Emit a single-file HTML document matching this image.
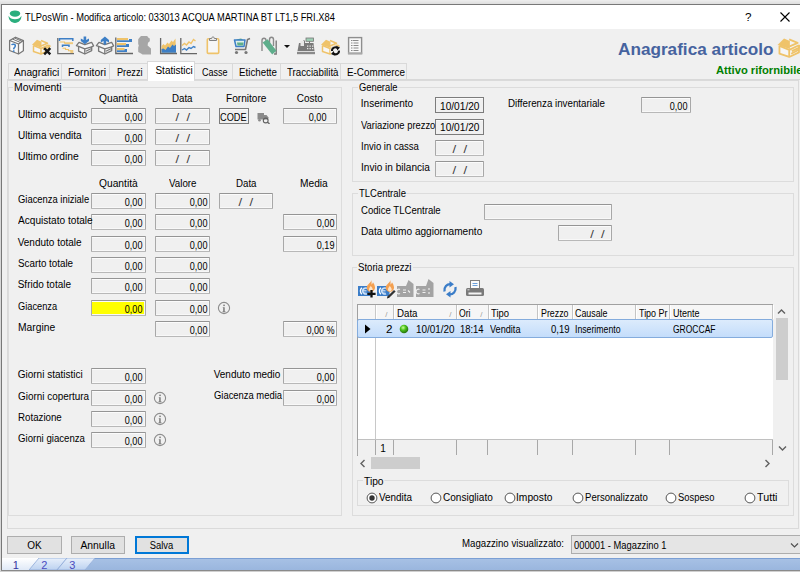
<!DOCTYPE html>
<html><head><meta charset="utf-8"><style>
html,body{margin:0;padding:0;}
body{width:800px;height:572px;overflow:hidden;position:relative;background:#f0f0f0;font-family:"Liberation Sans",sans-serif;}
div,svg{position:absolute;}
.t{white-space:nowrap;line-height:1;position:absolute;}
.lbg{background:#f0f0f0;padding:0 1px;margin-left:-1px;}
.fg{box-sizing:border-box;border:1px solid #a8a8a8;border-top-color:#959595;border-bottom-color:#b8b8b8;box-shadow:inset 0 1px 0 #fbfbfb,inset 0 -1px 0 #f8f8f8,inset -1px 0 0 #f6f6f6;border-radius:1px;}
.fw{box-sizing:border-box;background:#f0f0f0;border:1px solid #7c7c7c;box-shadow:inset 0 1px 0 #fafafa;}
.gb{box-sizing:border-box;border:1px solid #dcdcdc;}
</style></head><body>
<div style="position:absolute;left:0px;top:0px;width:800px;height:4px;background:linear-gradient(#eeeeee,#dedede)"></div>
<div style="position:absolute;left:0px;top:4px;width:1px;height:568px;background:#d8d8d8"></div>
<div style="position:absolute;left:1px;top:4px;width:799px;height:1px;background:#787878"></div>
<div style="position:absolute;left:1px;top:4px;width:1px;height:567px;background:#787878"></div>
<div style="position:absolute;left:2px;top:5px;width:798px;height:24px;background:#fff"></div>
<div style="position:absolute;left:1px;top:570px;width:799px;height:1px;background:#8a8a8a"></div>
<div style="position:absolute;left:0px;top:571px;width:800px;height:1px;background:#d0d0d0"></div>
<svg style="position:absolute;left:8px;top:9px" width="14" height="15" viewBox="0 0 14 15"><ellipse cx="7" cy="4.6" rx="5.2" ry="3.2" fill="#2bae7e"/><path d="M0.6 6.8 C1.5 9.2 4 10.3 7 10.3 C10 10.3 12.5 9.2 13.4 6.8 C13.6 10.8 10.8 13.9 7 13.9 C3.2 13.9 0.4 10.8 0.6 6.8z" fill="#2bae7e"/></svg>
<svg style="position:absolute;left:780px;top:12px" width="10" height="10" viewBox="0 0 10 10"><path d="M0.5 0.5L9.5 9.5M9.5 0.5L0.5 9.5" stroke="#000" stroke-width="1.1"/></svg>
<div style="position:absolute;left:8px;top:63px;width:399px;height:17px;background:#f0f0f0;border:1px solid #d9d9d9;box-sizing:border-box;border-bottom:none"></div>
<div style="position:absolute;left:7px;top:79px;width:900px;height:1px;background:#d9d9d9"></div>
<div style="position:absolute;left:61px;top:63px;width:1px;height:16px;background:#d9d9d9"></div>
<div style="position:absolute;left:109px;top:63px;width:1px;height:16px;background:#d9d9d9"></div>
<div style="position:absolute;left:232px;top:63px;width:1px;height:16px;background:#d9d9d9"></div>
<div style="position:absolute;left:280px;top:63px;width:1px;height:16px;background:#d9d9d9"></div>
<div style="position:absolute;left:340px;top:63px;width:1px;height:16px;background:#d9d9d9"></div>
<div style="position:absolute;left:147px;top:61px;width:48px;height:20px;background:#fff;border:1px solid #d9d9d9;border-bottom:none;box-sizing:border-box"></div>
<div style="position:absolute;left:7px;top:80px;width:792px;height:449px;border:1px solid #dadada;box-sizing:border-box;background:#f0f0f0"></div>
<div style="position:absolute;left:148px;top:79px;width:46px;height:2px;background:#fff"></div>
<div class="gb" style="left:8px;top:87px;width:334px;height:429px"></div>
<div class="fg" style="left:91px;top:108px;width:55px;height:16px;background:#f0f0f0"></div>
<div class="fg" style="left:155px;top:108px;width:55px;height:16px;background:#f0f0f0"></div>
<div class="fg" style="left:91px;top:129px;width:55px;height:16px;background:#f0f0f0"></div>
<div class="fg" style="left:155px;top:129px;width:55px;height:16px;background:#f0f0f0"></div>
<div class="fg" style="left:91px;top:150px;width:55px;height:16px;background:#f0f0f0"></div>
<div class="fg" style="left:155px;top:150px;width:55px;height:16px;background:#f0f0f0"></div>
<div class="fw" style="left:219px;top:108px;width:30px;height:16px"></div>
<div class="fg" style="left:283px;top:108px;width:54px;height:16px;background:#f0f0f0"></div>
<svg style="position:absolute;left:257px;top:112px" width="14" height="12" viewBox="0 0 14 12"><path d="M0.5 1h6.5v6.5h-6.5z" fill="#8a8a8a"/><path d="M7 3h2.5l1.8 2.2v2.3h-4.3z" fill="#8a8a8a"/><circle cx="2.5" cy="8.2" r="1.3" fill="#8a8a8a"/><circle cx="8.7" cy="8.5" r="2.4" fill="none" stroke="#606060" stroke-width="1.1"/><path d="M10.4 10.3l2.2 1.5" stroke="#606060" stroke-width="1.3"/></svg>
<div class="fg" style="left:91px;top:193px;width:55px;height:16px;background:#f0f0f0"></div>
<div class="fg" style="left:155px;top:193px;width:55px;height:16px;background:#f0f0f0"></div>
<div class="fg" style="left:91px;top:214px;width:55px;height:16px;background:#f0f0f0"></div>
<div class="fg" style="left:155px;top:214px;width:55px;height:16px;background:#f0f0f0"></div>
<div class="fg" style="left:91px;top:236px;width:55px;height:16px;background:#f0f0f0"></div>
<div class="fg" style="left:155px;top:236px;width:55px;height:16px;background:#f0f0f0"></div>
<div class="fg" style="left:91px;top:257px;width:55px;height:16px;background:#f0f0f0"></div>
<div class="fg" style="left:155px;top:257px;width:55px;height:16px;background:#f0f0f0"></div>
<div class="fg" style="left:91px;top:278px;width:55px;height:16px;background:#f0f0f0"></div>
<div class="fg" style="left:155px;top:278px;width:55px;height:16px;background:#f0f0f0"></div>
<div class="fg" style="left:91px;top:300px;width:55px;height:16px;background:#ffff00"></div>
<div class="fg" style="left:155px;top:300px;width:55px;height:16px;background:#f0f0f0"></div>
<div class="fg" style="left:219px;top:193px;width:54px;height:16px;background:#f0f0f0"></div>
<div class="fg" style="left:283px;top:214px;width:54px;height:16px;background:#f0f0f0"></div>
<div class="fg" style="left:283px;top:236px;width:54px;height:16px;background:#f0f0f0"></div>
<svg style="position:absolute;left:217px;top:301px" width="14" height="14" viewBox="0 0 14 14"><circle cx="7" cy="7" r="5.6" fill="none" stroke="#8c8c8c" stroke-width="1.1"/><rect x="6.3" y="3.6" width="1.5" height="1.5" fill="#7a7a7a"/><path d="M5.8 6.2h1.9v4.2h0.9v0.9h-3.2v-0.9h0.8v-3.3h-0.4z" fill="#7a7a7a"/></svg>
<div class="fg" style="left:155px;top:321px;width:55px;height:16px;background:#f0f0f0"></div>
<div class="fg" style="left:283px;top:321px;width:54px;height:16px;background:#f0f0f0"></div>
<div class="fg" style="left:91px;top:368px;width:55px;height:16px;background:#f0f0f0"></div>
<div class="fg" style="left:91px;top:390px;width:55px;height:16px;background:#f0f0f0"></div>
<svg style="position:absolute;left:152.5px;top:391px" width="14" height="14" viewBox="0 0 14 14"><circle cx="7" cy="7" r="5.6" fill="none" stroke="#8c8c8c" stroke-width="1.1"/><rect x="6.3" y="3.6" width="1.5" height="1.5" fill="#7a7a7a"/><path d="M5.8 6.2h1.9v4.2h0.9v0.9h-3.2v-0.9h0.8v-3.3h-0.4z" fill="#7a7a7a"/></svg>
<div class="fg" style="left:91px;top:411px;width:55px;height:16px;background:#f0f0f0"></div>
<svg style="position:absolute;left:152.5px;top:412px" width="14" height="14" viewBox="0 0 14 14"><circle cx="7" cy="7" r="5.6" fill="none" stroke="#8c8c8c" stroke-width="1.1"/><rect x="6.3" y="3.6" width="1.5" height="1.5" fill="#7a7a7a"/><path d="M5.8 6.2h1.9v4.2h0.9v0.9h-3.2v-0.9h0.8v-3.3h-0.4z" fill="#7a7a7a"/></svg>
<div class="fg" style="left:91px;top:432px;width:55px;height:16px;background:#f0f0f0"></div>
<svg style="position:absolute;left:152.5px;top:433px" width="14" height="14" viewBox="0 0 14 14"><circle cx="7" cy="7" r="5.6" fill="none" stroke="#8c8c8c" stroke-width="1.1"/><rect x="6.3" y="3.6" width="1.5" height="1.5" fill="#7a7a7a"/><path d="M5.8 6.2h1.9v4.2h0.9v0.9h-3.2v-0.9h0.8v-3.3h-0.4z" fill="#7a7a7a"/></svg>
<div class="fg" style="left:283px;top:368px;width:54px;height:16px;background:#f0f0f0"></div>
<div class="fg" style="left:283px;top:390px;width:54px;height:16px;background:#f0f0f0"></div>
<div class="gb" style="left:352px;top:87px;width:442px;height:95px"></div>
<div class="fw" style="left:435px;top:97px;width:49px;height:16px"></div>
<div class="fw" style="left:435px;top:119px;width:49px;height:16px"></div>
<div class="fg" style="left:435px;top:140px;width:49px;height:16px;background:#f0f0f0"></div>
<div class="fg" style="left:435px;top:161px;width:49px;height:16px;background:#f0f0f0"></div>
<div class="fg" style="left:641px;top:97px;width:50px;height:16px;background:#f0f0f0"></div>
<div class="gb" style="left:352px;top:193px;width:442px;height:63px"></div>
<div class="fg" style="left:484px;top:204px;width:128px;height:16px;background:#f0f0f0"></div>
<div class="fg" style="left:558px;top:225px;width:54px;height:16px;background:#f0f0f0"></div>
<div class="gb" style="left:352px;top:267px;width:442px;height:249px"></div>
<div style="position:absolute;left:357px;top:304px;width:416px;height:152px;background:#fff;border-top:1px solid #a0a0a0;border-left:1px solid #a0a0a0;box-sizing:border-box"></div>
<div style="position:absolute;left:358px;top:305px;width:415px;height:15px;background:#f6f6f6"></div>
<div style="position:absolute;left:375px;top:305px;width:1px;height:14px;background:#c4c4c4"></div>
<div style="position:absolute;left:376px;top:305px;width:1px;height:14px;background:#fff"></div>
<div style="position:absolute;left:393px;top:305px;width:1px;height:14px;background:#c4c4c4"></div>
<div style="position:absolute;left:394px;top:305px;width:1px;height:14px;background:#fff"></div>
<div style="position:absolute;left:456px;top:305px;width:1px;height:14px;background:#c4c4c4"></div>
<div style="position:absolute;left:457px;top:305px;width:1px;height:14px;background:#fff"></div>
<div style="position:absolute;left:488px;top:305px;width:1px;height:14px;background:#c4c4c4"></div>
<div style="position:absolute;left:489px;top:305px;width:1px;height:14px;background:#fff"></div>
<div style="position:absolute;left:537px;top:305px;width:1px;height:14px;background:#c4c4c4"></div>
<div style="position:absolute;left:538px;top:305px;width:1px;height:14px;background:#fff"></div>
<div style="position:absolute;left:572px;top:305px;width:1px;height:14px;background:#c4c4c4"></div>
<div style="position:absolute;left:573px;top:305px;width:1px;height:14px;background:#fff"></div>
<div style="position:absolute;left:635px;top:305px;width:1px;height:14px;background:#c4c4c4"></div>
<div style="position:absolute;left:636px;top:305px;width:1px;height:14px;background:#fff"></div>
<div style="position:absolute;left:669px;top:305px;width:1px;height:14px;background:#c4c4c4"></div>
<div style="position:absolute;left:670px;top:305px;width:1px;height:14px;background:#fff"></div>
<div style="position:absolute;left:772px;top:305px;width:1px;height:14px;background:#c4c4c4"></div>
<div style="position:absolute;left:773px;top:305px;width:1px;height:14px;background:#fff"></div>
<div style="position:absolute;left:358px;top:319px;width:415px;height:1px;background:#d5d5d5"></div>
<div style="position:absolute;left:357px;top:319px;width:416px;height:19px;background:linear-gradient(#dcebfc,#c4ddfb);border:1px solid #84acdd;border-radius:2px;box-sizing:border-box"></div>
<svg style="position:absolute;left:364px;top:324px" width="8" height="10" viewBox="0 0 8 10"><path d="M1 0.5L6.5 5L1 9.5z" fill="#000"/></svg>
<div style="position:absolute;left:375px;top:305px;width:1px;height:14px;background:#c8c8c8"></div>
<div style="position:absolute;left:375px;top:338px;width:1px;height:101px;background:#c8c8c8"></div>
<div style="position:absolute;left:358px;top:439px;width:415px;height:17px;background:#f0f0f0;border-top:1px solid #c0c0c0;box-sizing:border-box"></div>
<div style="position:absolute;left:357px;top:440px;width:1px;height:15px;background:#a8a8a8"></div>
<div style="position:absolute;left:375px;top:440px;width:1px;height:15px;background:#a8a8a8"></div>
<div style="position:absolute;left:393px;top:440px;width:1px;height:15px;background:#a8a8a8"></div>
<div style="position:absolute;left:456px;top:440px;width:1px;height:15px;background:#a8a8a8"></div>
<div style="position:absolute;left:487px;top:440px;width:1px;height:15px;background:#a8a8a8"></div>
<div style="position:absolute;left:537px;top:440px;width:1px;height:15px;background:#a8a8a8"></div>
<div style="position:absolute;left:572px;top:440px;width:1px;height:15px;background:#a8a8a8"></div>
<div style="position:absolute;left:635px;top:440px;width:1px;height:15px;background:#a8a8a8"></div>
<div style="position:absolute;left:669px;top:440px;width:1px;height:15px;background:#a8a8a8"></div>
<div style="position:absolute;left:772px;top:440px;width:1px;height:15px;background:#a8a8a8"></div>
<svg style="position:absolute;left:399px;top:324px" width="10" height="10" viewBox="0 0 10 10"><defs><radialGradient id="gb" cx="0.4" cy="0.35" r="0.6"><stop offset="0" stop-color="#c8ff9a"/><stop offset="0.5" stop-color="#4cc21c"/><stop offset="1" stop-color="#2a7a10"/></radialGradient></defs><circle cx="5" cy="5" r="4.3" fill="url(#gb)"/></svg>
<div style="position:absolute;left:774px;top:304px;width:15px;height:152px;background:#f0f0f0"></div>
<div style="position:absolute;left:776px;top:318px;width:12px;height:62px;background:#cdcdcd"></div>
<svg style="position:absolute;left:777px;top:308px" width="9" height="7" viewBox="0 0 9 7"><path d="M1 5.5L4.5 2L8 5.5" fill="none" stroke="#606060" stroke-width="1.4"/></svg>
<svg style="position:absolute;left:778px;top:445px" width="9" height="7" viewBox="0 0 9 7"><path d="M1 1.5L4.5 5L8 1.5" fill="none" stroke="#606060" stroke-width="1.4"/></svg>
<div style="position:absolute;left:371px;top:457px;width:49px;height:12px;background:#cdcdcd"></div>
<svg style="position:absolute;left:359px;top:459px" width="7" height="9" viewBox="0 0 7 9"><path d="M5.5 1L2 4.5L5.5 8" fill="none" stroke="#606060" stroke-width="1.4"/></svg>
<svg style="position:absolute;left:764px;top:459px" width="7" height="9" viewBox="0 0 7 9"><path d="M1.5 1L5 4.5L1.5 8" fill="none" stroke="#606060" stroke-width="1.4"/></svg>
<div class="gb" style="left:357px;top:480px;width:432px;height:26px"></div>
<svg style="position:absolute;left:365.5px;top:491.5px" width="12" height="12" viewBox="0 0 12 12"><circle cx="6" cy="6" r="4.9" fill="#fff" stroke="#555" stroke-width="1"/><circle cx="6" cy="6" r="2.7" fill="#333"/></svg>
<svg style="position:absolute;left:429.5px;top:491.5px" width="12" height="12" viewBox="0 0 12 12"><circle cx="6" cy="6" r="4.9" fill="#fff" stroke="#555" stroke-width="1"/></svg>
<svg style="position:absolute;left:503.5px;top:491.5px" width="12" height="12" viewBox="0 0 12 12"><circle cx="6" cy="6" r="4.9" fill="#fff" stroke="#555" stroke-width="1"/></svg>
<svg style="position:absolute;left:571.5px;top:491.5px" width="12" height="12" viewBox="0 0 12 12"><circle cx="6" cy="6" r="4.9" fill="#fff" stroke="#555" stroke-width="1"/></svg>
<svg style="position:absolute;left:665px;top:491.5px" width="12" height="12" viewBox="0 0 12 12"><circle cx="6" cy="6" r="4.9" fill="#fff" stroke="#555" stroke-width="1"/></svg>
<svg style="position:absolute;left:743.5px;top:491.5px" width="12" height="12" viewBox="0 0 12 12"><circle cx="6" cy="6" r="4.9" fill="#fff" stroke="#555" stroke-width="1"/></svg>
<div style="position:absolute;left:7px;top:536px;width:55px;height:18px;background:#e1e1e1;border:1px solid #adadad;box-sizing:border-box"></div>
<div style="position:absolute;left:71px;top:536px;width:54px;height:18px;background:#e1e1e1;border:1px solid #adadad;box-sizing:border-box"></div>
<div style="position:absolute;left:135px;top:536px;width:54px;height:18px;background:#e1e1e1;border:2px solid #0078d7;box-sizing:border-box"></div>
<div style="position:absolute;left:571px;top:535px;width:240px;height:19px;background:#e5e5e5;border:1px solid #adadad;box-sizing:border-box"></div>
<svg style="position:absolute;left:790px;top:542px" width="9" height="7" viewBox="0 0 9 7"><path d="M1 1.5L4.5 5L8 1.5" fill="none" stroke="#505050" stroke-width="1.2"/></svg>
<svg style="position:absolute;left:2px;top:558px" width="798" height="12" viewBox="0 0 798 12"><defs><linearGradient id="bar" x1="0" y1="0" x2="0" y2="1"><stop offset="0" stop-color="#7b9fd4"/><stop offset="0.1" stop-color="#7b9fd4"/><stop offset="0.12" stop-color="#a6c0e4"/><stop offset="1" stop-color="#9ab6de"/></linearGradient><linearGradient id="tb" x1="0" y1="0" x2="0" y2="1"><stop offset="0" stop-color="#e8f0fb"/><stop offset="1" stop-color="#bcd2f0"/></linearGradient><linearGradient id="t1" x1="0" y1="0" x2="0" y2="1"><stop offset="0" stop-color="#ffffff"/><stop offset="1" stop-color="#dfe9f7"/></linearGradient></defs><rect x="0" y="0" width="798" height="12" fill="url(#bar)"/><path d="M93 0L83 12H0V0z" fill="url(#t1)"/><path d="M65 0L55 12H27L37 0z" fill="url(#tb)" stroke="#8eaad8" stroke-width="0.8"/><path d="M93 0L83 12H55L65 0z" fill="url(#tb)" stroke="#8eaad8" stroke-width="0.8"/><path d="M0 0H28L27 12H0z" fill="url(#t1)"/></svg>
<svg style="position:absolute;left:0;top:0" width="400" height="60" viewBox="0 0 400 60"><g fill="#fafafa" stroke="#777777" stroke-width="1.25" stroke-linejoin="round"><path d="M9.6 40.5L15.5 37.2L23.4 40.6V50.8L18.5 54L9.6 50.5Z"/><path d="M9.6 40.5L18.5 44L23.4 40.6M18.5 44V54" fill="none"/><path d="M12.3 39L20.5 42.5M14.5 38L22 41.4" fill="none" stroke-width="1"/></g><path d="M11.8 45.2C12 43.6 15.6 43.8 15.3 46C15.1 47.4 13.8 47.7 13.6 49.3" fill="none" stroke="#3d7fc6" stroke-width="1.5"/><rect x="12.9" y="50.3" width="1.6" height="1.6" fill="#3d7fc6"/><g fill="none" stroke="#efc36a" stroke-width="1.5" stroke-linejoin="round"><path d="M33.5 45.5V51.5L41 54L48.5 50.5V45" fill="#f6f6f6"/><path d="M33.5 45.5L41 48.5L48.5 45M41 48.5V54"/><path d="M41 40.5L47.5 43.2L41 46" fill="#f3f3f3"/><path d="M48.5 45L50 46.2L43 49.5"/></g><path d="M32 44.8L37 39.8L41.5 41.8V47.8Z" fill="#efc36a"/><path d="M44.2 48.2L50.3 54.3M50.3 48.2L44.2 54.3" stroke="#161616" stroke-width="2.4"/><path d="M57.8 38V53.6H74" fill="none" stroke="#6a6a6a" stroke-width="1.3"/><path d="M59.5 41V38.8H72.8V41" fill="none" stroke="#3d7fc6" stroke-width="1.5"/><path d="M59.5 42H64.5V43H73" fill="none" stroke="#efc36a" stroke-width="1.1"/><rect x="64.5" y="42.6" width="8.5" height="1.6" fill="#efc36a" opacity="0.7"/><path d="M62.5 47V45.2H69V47" fill="none" stroke="#3d7fc6" stroke-width="1.5"/><path d="M62.5 48.2H65.5V49.5H68.5V50.8H71" fill="none" stroke="#efc36a" stroke-width="1.1"/><rect x="70.3" y="50" width="3" height="3" fill="#efc36a" opacity="0.85"/><g transform="translate(76,41)" fill="#f6f6f6" stroke="#777777" stroke-width="1.3" stroke-linejoin="round"><path d="M0.4 4.6L3 1.3L8.8 3.6L15.6 1.3L17.6 4.9L15.7 5.9V9.6L8.8 13L2.6 10.2V5.4Z"/><path d="M2.6 5.4L8.8 7.8L15.7 5.9M8.8 7.8V13" fill="none"/><path d="M9.8 10.2L15.5 7.4" fill="none" stroke-width="1.1"/></g><path d="M83.6 36.5h2.6v3.5l2.8-1.6v2.6l-4.1 3.2l-4.1-3.2v-2.6l2.8 1.6z" fill="#3d7fc6"/><g transform="translate(96,41)" fill="#f6f6f6" stroke="#777777" stroke-width="1.3" stroke-linejoin="round"><path d="M0.4 4.6L3 1.3L8.8 3.6L15.6 1.3L17.6 4.9L15.7 5.9V9.6L8.8 13L2.6 10.2V5.4Z"/><path d="M2.6 5.4L8.8 7.8L15.7 5.9M8.8 7.8V13" fill="none"/><path d="M9.8 10.2L15.5 7.4" fill="none" stroke-width="1.1"/></g><path d="M103.6 44.5h2.6v-3.5l2.8 1.6v-2.6l-4.1-3.5l-4.1 3.5v2.6l2.8-1.6z" fill="#3d7fc6"/><path d="M115.8 37.5V53.5H133" fill="none" stroke="#666" stroke-width="1.3"/><rect x="117" y="38" width="11" height="2.2" fill="#efc36a"/><rect x="117" y="40.3" width="15" height="1.7" fill="#3d7fc6"/><rect x="129" y="39" width="3" height="3" fill="#3d7fc6"/><rect x="117" y="43" width="9" height="2.2" fill="#efc36a"/><rect x="117" y="45.3" width="12" height="1.7" fill="#3d7fc6"/><rect x="126" y="44" width="3" height="3" fill="#3d7fc6"/><rect x="117" y="48" width="7.5" height="2.2" fill="#efc36a"/><rect x="117" y="50.3" width="10" height="1.7" fill="#3d7fc6"/><rect x="124.5" y="49" width="2.5" height="3" fill="#3d7fc6"/><path d="M141 36H147.2L148.2 37.5L149.8 38.5V41.2L148 42.8L147.6 45.5L151 48.5V54.6H142.5L141 53.5L138.2 52V47.5L138.8 45.5L138.2 44V39.2L140 37Z" fill="#a6a6a6"/><path d="M160.6 38V53.5H177" fill="none" stroke="#666" stroke-width="1.3"/><path d="M161.5 46L163.5 44L165 45.5L167.5 42.5L169 44L171.5 40.5L173 42L175.5 38.5L176 52.8H161.5Z" fill="#efc36a"/><path d="M161.5 49L163.5 48.5L165.5 50L168 46.5L170 48L172.5 44.5L174 46L176 44.5V52.8H161.5Z" fill="#3d7fc6"/><path d="M180.8 38V53.6H197" fill="none" stroke="#666" stroke-width="1.3"/><path d="M182 45.5L184.5 43.5L186.5 45L189 42L191 43.5L193.5 39.5L195.5 41" fill="none" stroke="#efc36a" stroke-width="1.4"/><path d="M182 50L184.5 48.5L186.5 50L189 47.5L191 48.5L193.5 46.5L195.5 47.5" fill="none" stroke="#3d7fc6" stroke-width="1.4"/><rect x="207.3" y="38.8" width="11.4" height="14.6" rx="1" fill="#f7f7f7" stroke="#efc36a" stroke-width="1.6"/><path d="M209.5 40.5V38.5H211.5C211.5 36.5 214.5 36.5 214.5 38.5H216.5V40.5Z" fill="#e8e8e8" stroke="#808080" stroke-width="1"/><path d="M236 39.5L241 38.5L243 39.5L240 41Z" fill="#5fae8c"/><path d="M234.5 40H245L244 46.5H236Z" fill="#dff0e8" stroke="#3d7fc6" stroke-width="1.5" stroke-linejoin="round"/><path d="M237 42.5H243.5L243 45.5H237.5Z" fill="#5fae8c"/><path d="M250 38.5L247.5 39.5L245.5 49.5H235" fill="none" stroke="#777" stroke-width="1.6"/><circle cx="236.5" cy="52.5" r="1.6" fill="#777"/><circle cx="246" cy="52.5" r="1.6" fill="#777"/><path d="M262 51V40.5C262 37.5 266 37.5 266 40.5V44" fill="none" stroke="#8a8a8a" stroke-width="1.4"/><path d="M269.5 45V39.5C269.5 36.5 273.5 36.5 273.5 39.5V46" fill="none" stroke="#8a8a8a" stroke-width="1.4"/><path d="M276.2 40.5V54H274" fill="none" stroke="#7a7a7a" stroke-width="1.4"/><path d="M262.6 42.6L267.6 39.2L276.4 50.8L272.2 54.6Z" fill="#5fae8c"/><path d="M284 45H290L287 48Z" fill="#111"/><rect x="306" y="38" width="7.5" height="3.3" fill="#9ecfb4" stroke="#777" stroke-width="0.8"/><path d="M309.5 41.3V43" stroke="#777" stroke-width="1"/><path d="M299 43H303V40.5H305V43H313.5L314.5 51H297.5Z" fill="#7a7a7a"/><rect x="300.5" y="41" width="3.5" height="5" fill="#e8e8e8"/><path d="M307 45.5h1.3v1.3h-1.3zM309.5 45.5h1.3v1.3h-1.3zM312 45.5h1.3v1.3h-1.3zM307 48h1.3v1.3h-1.3zM309.5 48h1.3v1.3h-1.3zM312 48h1.3v1.3h-1.3z" fill="#e8e8e8"/><rect x="297" y="51.8" width="18" height="2.4" fill="#8a8a8a"/><g transform="translate(289,0)"><g fill="none" stroke="#efc36a" stroke-width="1.5" stroke-linejoin="round"><path d="M33.5 45.5V51.5L41 54L48.5 50.5V45" fill="#f6f6f6"/><path d="M33.5 45.5L41 48.5L48.5 45M41 48.5V54"/><path d="M41 40.5L47.5 43.2L41 46" fill="#f3f3f3"/><path d="M48.5 45L50 46.2L43 49.5"/></g><path d="M32 44.8L37 39.8L41.5 41.8V47.8Z" fill="#efc36a"/></g><circle cx="335.5" cy="50.8" r="5.2" fill="#f0f0f0"/><path d="M332 51A3.4 3.4 0 0 1 337.8 48.3M339 50.6A3.4 3.4 0 0 1 333.2 53.3" fill="none" stroke="#111" stroke-width="2"/><path d="M336.2 45.8L340 47.6L337.2 50.5Z M334.8 55.8L331 54L333.8 51.1Z" fill="#111"/><rect x="348.6" y="37.6" width="13" height="16" fill="#f8f8f8" stroke="#8e8e8e" stroke-width="1.4"/><rect x="348" y="52.3" width="14.2" height="2" fill="#a8a8a8"/><path d="M351 40.5h1.5M353 40.5h5.5M351 43h1.5M353.5 43h5M351 45.5h1.5M353.5 45.5h5M351 48h1.5M353.5 48h5M351 50.5h1.5M353.5 50.5h5" stroke="#8a8a8a" stroke-width="1.1"/></svg>
<svg style="position:absolute;left:0;top:0" width="800" height="70" viewBox="0 0 800 70"><g transform="translate(777.5,38.5) scale(1.3) translate(-32,-39.8)"><g fill="none" stroke="#efc36a" stroke-width="1.4" stroke-linejoin="round"><path d="M33.5 45.5V51.5L41 54L48.5 50.5V45" fill="#f6f6f6"/><path d="M33.5 45.5L41 48.5L48.5 45M41 48.5V54"/><path d="M41 40.5L47.5 43.2L41 46" fill="#f3f3f3"/><path d="M48.5 45L50 46.2L43 49.5M42.5 51.5L48.5 48.5"/></g><path d="M32 44.8L37 39.8L41.5 41.8V47.8Z" fill="#efc36a"/></g></svg>
<svg style="position:absolute;left:0;top:270px" width="500" height="35" viewBox="0 270 500 35"><g transform="translate(358,286)"><rect x="0" y="0" width="12.5" height="10" fill="#3b7dc8"/><path d="M3.8 1.8C2 3.5 2 6.5 3.8 8.2" fill="none" stroke="#fff" stroke-width="1.4"/><path d="M9 2.3A3 3 0 1 0 9 7.7" fill="none" stroke="#cfe2f7" stroke-width="1.6"/><path d="M5 4.5h3.5M5 6h3.5" stroke="#cfe2f7" stroke-width="0.8"/></g><path transform="translate(366.2,280)" d="M4.8 0C5.5 2.5 1 4 0.6 7.2C0.3 9.8 2.3 11.8 4.6 11.8C7 11.8 9 9.8 8.8 7.2C8.6 4.8 7.5 3.5 6.8 2.2C6.3 3.5 5.8 4.3 5.2 4.5C5.6 3 5.5 1.2 4.8 0Z" fill="#f4a050"/><path transform="translate(366.2,280)" d="M4.6 5.8C4 7.3 2.8 8 2.8 9.4C2.8 10.5 3.6 11.3 4.6 11.3C5.6 11.3 6.5 10.5 6.5 9.4C6.5 8 5.2 7.3 4.6 5.8Z" fill="#fde3c6"/><path d="M371.5 290V297.6M367.4 293.8H375.6" stroke="#111" stroke-width="2.3"/><g transform="translate(377,286)"><rect x="0" y="0" width="12.5" height="10" fill="#3b7dc8"/><path d="M3.8 1.8C2 3.5 2 6.5 3.8 8.2" fill="none" stroke="#fff" stroke-width="1.4"/><path d="M9 2.3A3 3 0 1 0 9 7.7" fill="none" stroke="#cfe2f7" stroke-width="1.6"/><path d="M5 4.5h3.5M5 6h3.5" stroke="#cfe2f7" stroke-width="0.8"/></g><path transform="translate(385.2,280)" d="M4.8 0C5.5 2.5 1 4 0.6 7.2C0.3 9.8 2.3 11.8 4.6 11.8C7 11.8 9 9.8 8.8 7.2C8.6 4.8 7.5 3.5 6.8 2.2C6.3 3.5 5.8 4.3 5.2 4.5C5.6 3 5.5 1.2 4.8 0Z" fill="#f4a050"/><path transform="translate(385.2,280)" d="M4.6 5.8C4 7.3 2.8 8 2.8 9.4C2.8 10.5 3.6 11.3 4.6 11.3C5.6 11.3 6.5 10.5 6.5 9.4C6.5 8 5.2 7.3 4.6 5.8Z" fill="#fde3c6"/><path d="M388.2 297.3L394.8 290.7" stroke="#333" stroke-width="2.3"/><path d="M387 298.5L387.6 296.2L389.2 297.8Z" fill="#111"/><path d="M397 286H406L408.5 280L413.5 284V297H397Z" fill="#a3a3a3"/><path d="M400 289.5A2.3 2.3 0 1 0 400 293.5M403 290h3M403 292.5h3M408 290.5l2 2" fill="none" stroke="#f0f0f0" stroke-width="1.1"/><path d="M416 286H426L428.5 279L433.5 283V297H416Z" fill="#a3a3a3"/><path d="M419.5 289.5A2.3 2.3 0 1 0 419.5 293.5M422.5 290h3M422.5 292.5h3M429 288v2M429 292v2" fill="none" stroke="#f0f0f0" stroke-width="1.1"/><path d="M444.5 291.5C443.8 287 447 284 450.5 284.2" fill="none" stroke="#3b7dc8" stroke-width="2.3"/><path d="M449.5 281L454 284.3L449.5 287.5Z" fill="#3b7dc8"/><path d="M455.5 287C456.3 291.5 453 294.5 449.5 294.3" fill="none" stroke="#3b7dc8" stroke-width="2.3"/><path d="M450.5 297.5L446 294.2L450.5 291Z" fill="#3b7dc8"/><rect x="470.5" y="280.5" width="9" height="8" fill="#fafafa" stroke="#808080" stroke-width="1"/><path d="M472.5 283.5h5M472.5 285.5h5" stroke="#6aa0dc" stroke-width="1"/><rect x="466" y="288" width="18" height="8" rx="1.5" fill="#7a7a7a"/><rect x="468.5" y="292.5" width="13" height="2" fill="#f4f4f4"/><rect x="467.5" y="289.3" width="2" height="1" fill="#dcdcdc"/></svg>
<div class="t " style="top:12.49px;font-size:11px;color:#000;left:25.20px;transform-origin:0 0;transform:scaleX(0.846);">TLPosWin - Modifica articolo: 033013 ACQUA MARTINA BT LT1,5 FRI.X84</div>
<div class="t " style="top:11.79px;font-size:11px;color:#000;left:745.20px;transform-origin:0 0;transform:scaleX(1.062);">?</div>
<div class="t " style="top:41.21px;font-size:17px;color:#46639f;font-weight:bold;left:618.20px;transform-origin:0 0;transform:scaleX(1.010);">Anagrafica articolo</div>
<div class="t " style="top:64.79px;font-size:11px;color:#008000;font-weight:bold;left:715.70px;transform-origin:0 0;transform:scaleX(1.018);">Attivo rifornibile</div>
<div class="t " style="top:67.73px;font-size:10px;color:#000;left:14.20px;transform-origin:0 0;transform:scaleX(1.018);">Anagrafici</div>
<div class="t " style="top:67.73px;font-size:10px;color:#000;left:67.95px;transform-origin:0 0;transform:scaleX(1.036);">Fornitori</div>
<div class="t " style="top:67.73px;font-size:10px;color:#000;left:117.20px;transform-origin:0 0;transform:scaleX(0.918);">Prezzi</div>
<div class="t " style="top:65.73px;font-size:10px;color:#000;left:155.45px;transform-origin:0 0;">Statistici</div>
<div class="t " style="top:67.73px;font-size:10px;color:#000;left:202.20px;transform-origin:0 0;transform:scaleX(0.900);">Casse</div>
<div class="t " style="top:67.73px;font-size:10px;color:#000;left:238.70px;transform-origin:0 0;transform:scaleX(0.977);">Etichette</div>
<div class="t " style="top:67.73px;font-size:10px;color:#000;left:286.70px;transform-origin:0 0;transform:scaleX(0.972);">Tracciabilità</div>
<div class="t " style="top:67.73px;font-size:10px;color:#000;left:346.70px;transform-origin:0 0;transform:scaleX(0.985);">E-Commerce</div>
<div class="t lbg" style="top:83.13px;font-size:10px;color:#000;left:14.20px;transform-origin:0 0;transform:scaleX(1.042);">Movimenti</div>
<div class="t " style="top:94.13px;font-size:10px;color:#000;left:99.20px;transform-origin:0 0;transform:scaleX(1.025);">Quantità</div>
<div class="t " style="top:94.13px;font-size:10px;color:#000;left:171.95px;transform-origin:0 0;transform:scaleX(0.971);">Data</div>
<div class="t " style="top:94.13px;font-size:10px;color:#000;left:226.20px;transform-origin:0 0;transform:scaleX(1.012);">Fornitore</div>
<div class="t " style="top:94.13px;font-size:10px;color:#000;left:296.70px;transform-origin:0 0;">Costo</div>
<div class="t " style="top:110.13px;font-size:10px;color:#000;left:17.70px;transform-origin:0 0;transform:scaleX(1.011);">Ultimo acquisto</div>
<div class="t " style="top:112.41px;font-size:10.5px;color:#000;left:122.16px;transform-origin:100% 0;transform:scaleX(0.865);">0,00</div>
<div class="t " style="top:112.41px;font-size:10.5px;color:#3c3c3c;left:176.67px;transform-origin:50% 0;transform:scaleX(1.243);">/  /</div>
<div class="t " style="top:131.13px;font-size:10px;color:#000;left:17.70px;transform-origin:0 0;transform:scaleX(1.005);">Ultima vendita</div>
<div class="t " style="top:133.41px;font-size:10.5px;color:#000;left:122.16px;transform-origin:100% 0;transform:scaleX(0.865);">0,00</div>
<div class="t " style="top:133.41px;font-size:10.5px;color:#3c3c3c;left:176.67px;transform-origin:50% 0;transform:scaleX(1.243);">/  /</div>
<div class="t " style="top:152.13px;font-size:10px;color:#000;left:17.70px;transform-origin:0 0;transform:scaleX(1.030);">Ultimo ordine</div>
<div class="t " style="top:154.41px;font-size:10.5px;color:#000;left:122.16px;transform-origin:100% 0;transform:scaleX(0.865);">0,00</div>
<div class="t " style="top:154.41px;font-size:10.5px;color:#3c3c3c;left:176.67px;transform-origin:50% 0;transform:scaleX(1.243);">/  /</div>
<div class="t " style="top:112.21px;font-size:10.5px;color:#000;left:220.20px;transform-origin:0 0;transform:scaleX(0.874);">CODE</div>
<div class="t " style="top:112.41px;font-size:10.5px;color:#000;left:306.16px;transform-origin:100% 0;transform:scaleX(0.865);">0,00</div>
<div class="t " style="top:179.13px;font-size:10px;color:#000;left:99.20px;transform-origin:0 0;transform:scaleX(1.025);">Quantità</div>
<div class="t " style="top:179.13px;font-size:10px;color:#000;left:168.70px;transform-origin:0 0;transform:scaleX(0.976);">Valore</div>
<div class="t " style="top:179.13px;font-size:10px;color:#000;left:235.95px;transform-origin:0 0;transform:scaleX(0.971);">Data</div>
<div class="t " style="top:179.13px;font-size:10px;color:#000;left:300.45px;transform-origin:0 0;transform:scaleX(1.019);">Media</div>
<div class="t " style="top:194.63px;font-size:10px;color:#000;left:17.70px;transform-origin:0 0;transform:scaleX(0.941);">Giacenza iniziale</div>
<div class="t " style="top:197.41px;font-size:10.5px;color:#000;left:122.16px;transform-origin:100% 0;transform:scaleX(0.865);">0,00</div>
<div class="t " style="top:197.41px;font-size:10.5px;color:#000;left:187.16px;transform-origin:100% 0;transform:scaleX(0.865);">0,00</div>
<div class="t " style="top:215.63px;font-size:10px;color:#000;left:17.70px;transform-origin:0 0;transform:scaleX(1.010);">Acquistato totale</div>
<div class="t " style="top:218.41px;font-size:10.5px;color:#000;left:122.16px;transform-origin:100% 0;transform:scaleX(0.865);">0,00</div>
<div class="t " style="top:218.41px;font-size:10.5px;color:#000;left:187.16px;transform-origin:100% 0;transform:scaleX(0.865);">0,00</div>
<div class="t " style="top:237.63px;font-size:10px;color:#000;left:17.70px;transform-origin:0 0;">Venduto totale</div>
<div class="t " style="top:240.41px;font-size:10.5px;color:#000;left:122.16px;transform-origin:100% 0;transform:scaleX(0.865);">0,00</div>
<div class="t " style="top:240.41px;font-size:10.5px;color:#000;left:187.16px;transform-origin:100% 0;transform:scaleX(0.865);">0,00</div>
<div class="t " style="top:258.64px;font-size:10px;color:#000;left:17.70px;transform-origin:0 0;transform:scaleX(0.981);">Scarto totale</div>
<div class="t " style="top:261.41px;font-size:10.5px;color:#000;left:122.16px;transform-origin:100% 0;transform:scaleX(0.865);">0,00</div>
<div class="t " style="top:261.41px;font-size:10.5px;color:#000;left:187.16px;transform-origin:100% 0;transform:scaleX(0.865);">0,00</div>
<div class="t " style="top:279.64px;font-size:10px;color:#000;left:17.70px;transform-origin:0 0;">Sfrido totale</div>
<div class="t " style="top:282.41px;font-size:10.5px;color:#000;left:122.16px;transform-origin:100% 0;transform:scaleX(0.865);">0,00</div>
<div class="t " style="top:282.41px;font-size:10.5px;color:#000;left:187.16px;transform-origin:100% 0;transform:scaleX(0.865);">0,00</div>
<div class="t " style="top:301.64px;font-size:10px;color:#000;left:17.70px;transform-origin:0 0;transform:scaleX(0.926);">Giacenza</div>
<div class="t " style="top:304.41px;font-size:10.5px;color:#000;left:122.16px;transform-origin:100% 0;transform:scaleX(0.865);">0,00</div>
<div class="t " style="top:304.41px;font-size:10.5px;color:#000;left:187.16px;transform-origin:100% 0;transform:scaleX(0.865);">0,00</div>
<div class="t " style="top:197.41px;font-size:10.5px;color:#3c3c3c;left:240.17px;transform-origin:50% 0;transform:scaleX(1.243);">/  /</div>
<div class="t " style="top:218.41px;font-size:10.5px;color:#000;left:314.16px;transform-origin:100% 0;transform:scaleX(0.865);">0,00</div>
<div class="t " style="top:240.41px;font-size:10.5px;color:#000;left:314.16px;transform-origin:100% 0;transform:scaleX(0.865);">0,19</div>
<div class="t " style="top:322.64px;font-size:10px;color:#000;left:17.70px;transform-origin:0 0;transform:scaleX(1.027);">Margine</div>
<div class="t " style="top:325.41px;font-size:10.5px;color:#000;left:187.16px;transform-origin:100% 0;transform:scaleX(0.865);">0,00</div>
<div class="t " style="top:325.41px;font-size:10.5px;color:#000;left:301.91px;transform-origin:100% 0;transform:scaleX(0.865);">0,00 %</div>
<div class="t " style="top:369.64px;font-size:10px;color:#000;left:17.70px;transform-origin:0 0;">Giorni statistici</div>
<div class="t " style="top:372.41px;font-size:10.5px;color:#000;left:122.16px;transform-origin:100% 0;transform:scaleX(0.865);">0,00</div>
<div class="t " style="top:391.64px;font-size:10px;color:#000;left:17.70px;transform-origin:0 0;transform:scaleX(0.992);">Giorni copertura</div>
<div class="t " style="top:394.41px;font-size:10.5px;color:#000;left:122.16px;transform-origin:100% 0;transform:scaleX(0.865);">0,00</div>
<div class="t " style="top:412.64px;font-size:10px;color:#000;left:17.70px;transform-origin:0 0;transform:scaleX(0.972);">Rotazione</div>
<div class="t " style="top:415.41px;font-size:10.5px;color:#000;left:122.16px;transform-origin:100% 0;transform:scaleX(0.865);">0,00</div>
<div class="t " style="top:433.64px;font-size:10px;color:#000;left:17.70px;transform-origin:0 0;transform:scaleX(0.964);">Giorni giacenza</div>
<div class="t " style="top:436.41px;font-size:10.5px;color:#000;left:122.16px;transform-origin:100% 0;transform:scaleX(0.865);">0,00</div>
<div class="t " style="top:369.64px;font-size:10px;color:#000;left:213.70px;transform-origin:0 0;">Venduto medio</div>
<div class="t " style="top:372.41px;font-size:10.5px;color:#000;left:314.16px;transform-origin:100% 0;transform:scaleX(0.865);">0,00</div>
<div class="t " style="top:391.14px;font-size:10px;color:#000;left:213.70px;transform-origin:0 0;transform:scaleX(0.941);">Giacenza media</div>
<div class="t " style="top:394.41px;font-size:10.5px;color:#000;left:314.16px;transform-origin:100% 0;transform:scaleX(0.865);">0,00</div>
<div class="t lbg" style="top:82.63px;font-size:10px;color:#000;left:358.70px;transform-origin:0 0;transform:scaleX(0.936);">Generale</div>
<div class="t " style="top:99.13px;font-size:10px;color:#000;left:360.80px;transform-origin:0 0;">Inserimento</div>
<div class="t " style="top:100.91px;font-size:10.5px;color:#000;left:440.20px;transform-origin:0 0;transform:scaleX(0.966);">10/01/20</div>
<div class="t " style="top:120.63px;font-size:10px;color:#000;left:360.80px;transform-origin:0 0;transform:scaleX(0.937);">Variazione prezzo</div>
<div class="t " style="top:122.31px;font-size:10.5px;color:#000;left:440.20px;transform-origin:0 0;transform:scaleX(0.966);">10/01/20</div>
<div class="t " style="top:142.13px;font-size:10px;color:#000;left:360.80px;transform-origin:0 0;transform:scaleX(0.956);">Invio in cassa</div>
<div class="t " style="top:144.41px;font-size:10.5px;color:#3c3c3c;left:453.67px;transform-origin:50% 0;transform:scaleX(1.243);">/  /</div>
<div class="t " style="top:162.63px;font-size:10px;color:#000;left:360.80px;transform-origin:0 0;transform:scaleX(1.008);">Invio in bilancia</div>
<div class="t " style="top:165.41px;font-size:10.5px;color:#3c3c3c;left:453.67px;transform-origin:50% 0;transform:scaleX(1.243);">/  /</div>
<div class="t " style="top:99.13px;font-size:10px;color:#000;left:508.20px;transform-origin:0 0;transform:scaleX(0.976);">Differenza inventariale</div>
<div class="t " style="top:101.41px;font-size:10.5px;color:#000;left:667.16px;transform-origin:100% 0;transform:scaleX(0.865);">0,00</div>
<div class="t lbg" style="top:189.13px;font-size:10px;color:#000;left:358.70px;transform-origin:0 0;transform:scaleX(0.950);">TLCentrale</div>
<div class="t " style="top:205.73px;font-size:10px;color:#000;left:360.80px;transform-origin:0 0;transform:scaleX(0.958);">Codice TLCentrale</div>
<div class="t " style="top:227.13px;font-size:10px;color:#000;left:360.80px;transform-origin:0 0;transform:scaleX(1.010);">Data ultimo aggiornamento</div>
<div class="t " style="top:229.41px;font-size:10.5px;color:#3c3c3c;left:592.93px;transform-origin:100% 0;transform:scaleX(1.243);">/  /</div>
<div class="t lbg" style="top:263.14px;font-size:10px;color:#000;left:358.20px;transform-origin:0 0;transform:scaleX(0.963);">Storia prezzi</div>
<div class="t " style="top:443.64px;font-size:10px;color:#000;left:380.20px;transform-origin:0 0;">1</div>
<div class="t " style="top:311.13px;font-size:8px;color:#a0a0a0;left:385.20px;transform-origin:0 0;">/</div>
<div class="t " style="top:309.44px;font-size:10px;color:#000;left:397.20px;transform-origin:0 0;transform:scaleX(0.971);">Data</div>
<div class="t " style="top:311.13px;font-size:8px;color:#a0a0a0;left:449.20px;transform-origin:0 0;">/</div>
<div class="t " style="top:309.44px;font-size:10px;color:#000;left:459.20px;transform-origin:0 0;transform:scaleX(0.863);">Ori</div>
<div class="t " style="top:311.13px;font-size:8px;color:#a0a0a0;left:480.20px;transform-origin:0 0;">/</div>
<div class="t " style="top:309.44px;font-size:10px;color:#000;left:490.70px;transform-origin:0 0;transform:scaleX(0.943);">Tipo</div>
<div class="t " style="top:309.44px;font-size:10px;color:#000;left:541.20px;transform-origin:0 0;transform:scaleX(0.884);">Prezzo</div>
<div class="t " style="top:309.44px;font-size:10px;color:#000;left:575.20px;transform-origin:0 0;transform:scaleX(0.886);">Causale</div>
<div class="t " style="top:309.44px;font-size:10px;color:#000;left:639.20px;transform-origin:0 0;transform:scaleX(0.895);">Tipo Pr</div>
<div class="t " style="top:309.44px;font-size:10px;color:#000;left:673.20px;transform-origin:0 0;transform:scaleX(0.899);">Utente</div>
<div class="t " style="top:324.94px;font-size:10px;color:#000;left:386.20px;transform-origin:0 0;transform:scaleX(1.169);">2</div>
<div class="t " style="top:324.94px;font-size:10px;color:#000;left:416.20px;transform-origin:0 0;transform:scaleX(0.989);">10/01/20</div>
<div class="t " style="top:324.94px;font-size:10px;color:#000;left:460.20px;transform-origin:0 0;transform:scaleX(0.939);">18:14</div>
<div class="t " style="top:324.94px;font-size:10px;color:#000;left:490.20px;transform-origin:0 0;transform:scaleX(0.914);">Vendita</div>
<div class="t " style="top:324.94px;font-size:10px;color:#000;left:550.14px;transform-origin:100% 0;transform:scaleX(0.951);">0,19</div>
<div class="t " style="top:324.94px;font-size:10px;color:#000;left:575.20px;transform-origin:0 0;transform:scaleX(0.871);">Inserimento</div>
<div class="t " style="top:324.94px;font-size:10px;color:#000;left:673.20px;transform-origin:0 0;transform:scaleX(0.850);">GROCCAF</div>
<div class="t lbg" style="top:476.64px;font-size:10px;color:#000;left:363.70px;transform-origin:0 0;transform:scaleX(1.022);">Tipo</div>
<div class="t " style="top:493.14px;font-size:10px;color:#000;left:378.70px;transform-origin:0 0;transform:scaleX(0.989);">Vendita</div>
<div class="t " style="top:493.14px;font-size:10px;color:#000;left:442.95px;transform-origin:0 0;transform:scaleX(1.006);">Consigliato</div>
<div class="t " style="top:493.14px;font-size:10px;color:#000;left:516.20px;transform-origin:0 0;transform:scaleX(1.026);">Imposto</div>
<div class="t " style="top:493.14px;font-size:10px;color:#000;left:585.00px;transform-origin:0 0;transform:scaleX(0.956);">Personalizzato</div>
<div class="t " style="top:493.14px;font-size:10px;color:#000;left:678.20px;transform-origin:0 0;transform:scaleX(0.938);">Sospeso</div>
<div class="t " style="top:493.14px;font-size:10px;color:#000;left:757.20px;transform-origin:0 0;transform:scaleX(1.075);">Tutti</div>
<div class="t " style="top:541.13px;font-size:10px;color:#000;left:27.28px;transform-origin:50% 0;">OK</div>
<div class="t " style="top:541.13px;font-size:10px;color:#000;left:81.32px;transform-origin:50% 0;transform:scaleX(1.034);">Annulla</div>
<div class="t " style="top:541.13px;font-size:10px;color:#000;left:149.49px;transform-origin:50% 0;transform:scaleX(0.939);">Salva</div>
<div class="t " style="top:538.63px;font-size:10px;color:#000;left:462.20px;transform-origin:0 0;transform:scaleX(0.966);">Magazzino visualizzato:</div>
<div class="t " style="top:540.29px;font-size:11px;color:#000;left:573.70px;transform-origin:0 0;transform:scaleX(0.850);">000001 - Magazzino 1</div>
<div class="t " style="top:560.29px;font-size:11px;color:#3535a0;left:12.70px;transform-origin:0 0;">1</div>
<div class="t " style="top:560.29px;font-size:11px;color:#4a4ac0;left:41.20px;transform-origin:0 0;">2</div>
<div class="t " style="top:560.29px;font-size:11px;color:#4a4ac0;left:69.20px;transform-origin:0 0;">3</div>
</body></html>
